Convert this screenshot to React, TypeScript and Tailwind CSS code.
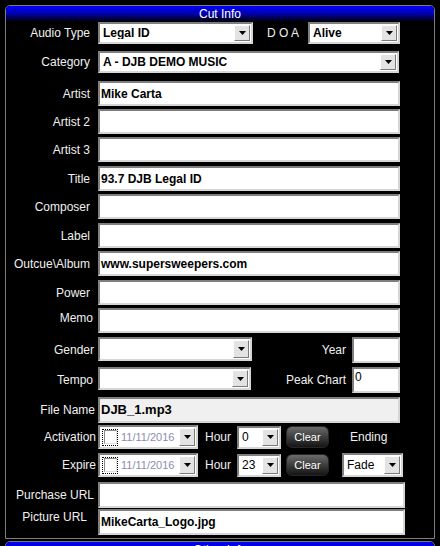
import type { ReactNode } from "react";

const inset =
  "border-2 border-t-[#7f7f7f] border-l-[#7f7f7f] border-r-[#d6d6d6] border-b-[#d6d6d6]";

function Arrow() {
  return (
    <svg width="7" height="4" viewBox="0 0 7 4">
      <path d="M0 0h7L3.5 4z" fill="#000" />
    </svg>
  );
}

function DropBtn() {
  return (
    <div className="w-[16px] self-stretch my-[1px] mr-[1px] flex items-center justify-center bg-[#e3e3e3] border border-t-white border-l-white border-r-[#7a7a7a] border-b-[#7a7a7a]">
      <Arrow />
    </div>
  );
}

function Select({ value, className, bold = true }: { value?: string; className: string; bold?: boolean }) {
  return (
    <div className={`${inset} bg-white flex items-stretch ${className}`}>
      <span className={`flex-1 pl-[3px] text-[12px] leading-none self-center text-black truncate ${bold ? "font-bold" : ""}`}>
        {value}
      </span>
      <DropBtn />
    </div>
  );
}

function Field({ value, className = "w-[302px] h-[26px]", bg = "bg-white", text = "text-[12px]" }: {
  value?: string;
  className?: string;
  bg?: string;
  text?: string;
}) {
  return (
    <div className={`${inset} ${bg} ${className} flex items-center pl-[1px] font-bold text-black ${text}`}>
      {value}
    </div>
  );
}

function Label({ children, pr = "pr-[8px]", extra = "" }: { children: ReactNode; pr?: string; extra?: string }) {
  return (
    <div className={`w-[92px] shrink-0 text-right text-[12px] text-[#f0f0f0] whitespace-nowrap ${pr} ${extra}`}>
      {children}
    </div>
  );
}

function Row({ label, pr, mt, h, extra, children }: {
  label: string;
  pr?: string;
  mt: string;
  h: string;
  extra?: string;
  children: ReactNode;
}) {
  return (
    <div className={`flex items-center ${mt} ${h}`}>
      <Label pr={pr} extra={extra}>{label}</Label>
      {children}
    </div>
  );
}

function DateBox() {
  return (
    <div className={`${inset} bg-white w-[100px] h-[24px] flex items-stretch`}>
      <div className="w-[16px] h-[17px] self-center ml-[2px] border border-dotted border-black flex items-center justify-center">
        <div className="w-[13px] h-[14px] bg-white border border-t-[#8a8a8a] border-l-[#8a8a8a] border-r-[#e0e0e0] border-b-[#e0e0e0]" />
      </div>
      <span className="flex-1 pl-[3px] self-center text-[11px] leading-none text-[#8c8cb0]">11/11/2016</span>
      <DropBtn />
    </div>
  );
}

function ClearBtn() {
  return (
    <button className="w-[43px] h-[22px] ml-[5px] rounded-[6px] border border-[#262626] bg-linear-to-b from-[#6c6c6c] to-[#151515] text-white text-[11px] leading-none">
      Clear
    </button>
  );
}

function Header({ title }: { title: string }) {
  return (
    <div className="h-[16px] rounded-t-[4px] bg-linear-to-b from-[#0000ff] via-[#0000a8] to-[#000008] text-white text-[12px] leading-[16px] text-center">
      {title}
    </div>
  );
}

export default function App() {
  return (
    <div className="w-[440px] h-[546px] overflow-hidden bg-black pt-[5px] pl-[5px] font-['Liberation_Sans',Arial,sans-serif]">
      <div className="w-[430px] border border-[#7c7c7c] rounded-t-[5px] pb-[3px]">
        <Header title="Cut Info" />

        <Row label="Audio Type" mt="mt-0" h="h-[22px]">
          <Select value="Legal ID" className="w-[155px] h-[22px]" />
          <span className="ml-[14px] text-[12px] text-[#f0f0f0]">D O A</span>
          <Select value="Alive" className="ml-[9px] w-[92px] h-[22px]" />
        </Row>

        <Row label="Category" mt="mt-[7px]" h="h-[22px]">
          <Select value="A - DJB DEMO MUSIC" className="w-[301px] h-[22px]" />
        </Row>

        <Row label="Artist" mt="mt-[8px]" h="h-[25px]">
          <Field value="Mike Carta" className="w-[302px] h-[25px]" />
        </Row>
        <Row label="Artist 2" mt="mt-[3px]" h="h-[25px]">
          <Field className="w-[302px] h-[25px]" />
        </Row>
        <Row label="Artist 3" mt="mt-[3px]" h="h-[25px]">
          <Field className="w-[302px] h-[25px]" />
        </Row>
        <Row label="Title" mt="mt-[4px]" h="h-[25px]">
          <Field value="93.7 DJB Legal ID" className="w-[302px] h-[25px]" />
        </Row>
        <Row label="Composer" mt="mt-[3px]" h="h-[25px]">
          <Field className="w-[302px] h-[25px]" />
        </Row>
        <Row label="Label" mt="mt-[4px]" h="h-[25px]">
          <Field className="w-[302px] h-[25px]" />
        </Row>
        <Row label="Outcue\Album" mt="mt-[3px]" h="h-[25px]">
          <Field value="www.supersweepers.com" className="w-[302px] h-[25px]" />
        </Row>
        <Row label="Power" mt="mt-[4px]" h="h-[25px]">
          <Field className="w-[302px] h-[25px]" />
        </Row>
        <Row label="Memo" mt="mt-[3px]" h="h-[25px]" pr="pr-[5px]" extra="-translate-y-[3px]">
          <Field className="w-[302px] h-[25px]" />
        </Row>

        <Row label="Gender" mt="mt-[4px]" h="h-[26px]" pr="pr-[4px]">
          <div className="w-[302px] flex items-center">
            <Select className="w-[154px] h-[24px] self-start" />
            <span className="flex-1 text-right pr-[6px] text-[12px] text-[#f0f0f0]">Year</span>
            <Field className="w-[48px] h-[26px]" />
          </div>
        </Row>

        <Row label="Tempo" mt="mt-[4px]" h="h-[26px]" pr="pr-[5px]">
          <div className="w-[302px] flex items-center">
            <Select className="w-[153px] h-[23px] self-start" />
            <span className="flex-1 text-right pr-[6px] text-[12px] text-[#f0f0f0]">Peak Chart</span>
            <div className={`${inset} bg-white w-[48px] h-[26px] pl-[1px] text-[12px] leading-[16px] text-black`}>0</div>
          </div>
        </Row>

        <Row label="File Name" mt="mt-[4px]" h="h-[26px]" pr="pr-[3px]">
          <Field value="DJB_1.mp3" className="w-[302px] h-[26px]" bg="bg-[#f0f0f0]" text="text-[13px]" />
        </Row>

        <Row label="Activation" mt="mt-[2px]" h="h-[24px]" pr="pr-[2px]">
          <DateBox />
          <span className="ml-[7px] text-[12px] text-[#f0f0f0]">Hour</span>
          <Select value="0" bold={false} className="ml-[6px] w-[44px] h-[23px]" />
          <ClearBtn />
          <span className="ml-[21px] text-[12px] text-[#f0f0f0]">Ending</span>
        </Row>

        <Row label="Expire" mt="mt-[4px]" h="h-[24px]" pr="pr-[2px]">
          <DateBox />
          <span className="ml-[7px] text-[12px] text-[#f0f0f0]">Hour</span>
          <Select value="23" bold={false} className="ml-[6px] w-[44px] h-[23px]" />
          <ClearBtn />
          <Select value="Fade" bold={false} className="ml-[13px] w-[61px] h-[24px]" />
        </Row>

        <Row label="Purchase URL" mt="mt-[5px]" h="h-[26px]" pr="pr-[4px]">
          <Field className="w-[307px] h-[26px]" />
        </Row>
        <Row label="Picture URL" mt="mt-[1px]" h="h-[26px]" pr="pr-[11px]" extra="-translate-y-[5px]">
          <Field value="MikeCarta_Logo.jpg" className="w-[307px] h-[26px]" />
        </Row>
      </div>

      <div className="mt-[2px] w-[430px] border border-[#7c7c7c] rounded-t-[5px]">
        <Header title="Other Info" />
      </div>
    </div>
  );
}
